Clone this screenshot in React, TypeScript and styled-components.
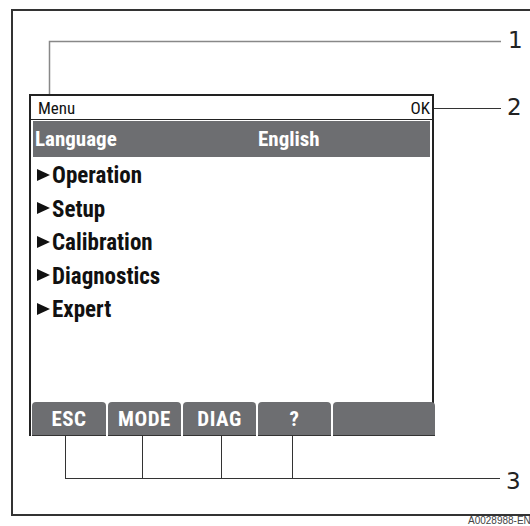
import React from 'react';
import styled, { createGlobalStyle } from 'styled-components';

const GlobalStyle = createGlobalStyle`
  html, body {
    margin: 0;
    padding: 0;
    background: #fff;
    overflow: hidden;
  }
  body {
    font-family: "Roboto Condensed", "Liberation Sans Narrow", "Arial Narrow", "DejaVu Sans Condensed", sans-serif;
  }
`;

const Page = styled.div`
  position: relative;
  width: 530px;
  height: 526px;
  overflow: hidden;
  box-sizing: border-box;
  padding: 9px 0 0 11px;
`;

const Frame = styled.div`
  box-sizing: border-box;
  width: 540px;
  height: 507px;
  border: 2px solid #333;
  border-right: none;
  padding: 83px 0 0 16px;
`;

const Screen = styled.div`
  box-sizing: border-box;
  width: 405px;
  height: 342px;
  border: 2px solid #222;
  border-bottom: none;
  display: flex;
  flex-direction: column;
`;

const Header = styled.div`
  height: 24px;
  flex: 0 0 auto;
  display: flex;
  align-items: flex-end;
  justify-content: space-between;
  padding: 0 2px 2px 7px;
  box-sizing: border-box;
  border-bottom: 1.5px solid #222;
  font-size: 17px;
  line-height: 1;
  color: #111;
`;

const Body = styled.div`
  flex: 1;
  display: flex;
  flex-direction: column;
  padding: 1px 2px 0;
`;

const SelectedRow = styled.div`
  height: 36px;
  background: #6d6e71;
  color: #fff;
  display: grid;
  grid-template-columns: 223px 1fr;
  align-items: center;
  font-weight: 700;
  font-size: 21px;
  padding-left: 2px;
`;

const MenuList = styled.ul`
  list-style: none;
  margin: 2px 0 0;
  padding: 0;
`;

const MenuItem = styled.li`
  height: 33.5px;
  display: flex;
  align-items: center;
  gap: 2px;
  padding-left: 4px;
  font-weight: 700;
  font-size: 23px;
  color: #111;
`;

const Arrow = styled.span`
  width: 0;
  height: 0;
  border-top: 6.5px solid transparent;
  border-bottom: 6.5px solid transparent;
  border-left: 13px solid #111;
  margin-top: -2px;
`;

const TabBar = styled.div`
  display: flex;
  gap: 2px;
  height: 34px;
  margin: 0 -3px 0 1px;
`;

const Tab = styled.div<{ $w?: number }>`
  flex: ${({ $w }) => ($w ? `0 0 ${$w}px` : '1')};
  background: #6d6e71;
  border-radius: 4px 4px 0 0;
  border-bottom: 1px solid #333;
  display: flex;
  align-items: center;
  justify-content: center;
  color: #fff;
  font-weight: 700;
  font-size: 21px;
  letter-spacing: 0.5px;
`;

const Leaders = styled.svg`
  position: absolute;
  left: 0;
  top: 0;
  pointer-events: none;
`;

const Callout = styled.span<{ $x: number; $y: number }>`
  position: absolute;
  left: ${({ $x }) => $x}px;
  top: ${({ $y }) => $y}px;
  font-family: "DejaVu Sans", sans-serif;
  font-size: 23px;
  line-height: 1;
  color: #222;
`;

const Code = styled.div`
  position: absolute;
  left: 468px;
  top: 515px;
  font-family: "Liberation Sans", sans-serif;
  font-size: 10px;
  color: #444;
  white-space: nowrap;
`;

const items = ['Operation', 'Setup', 'Calibration', 'Diagnostics', 'Expert'];
const tabs: { label: string; w?: number }[] = [
  { label: 'ESC', w: 74 },
  { label: 'MODE', w: 73 },
  { label: 'DIAG', w: 73 },
  { label: '?', w: 73 },
  { label: '' },
];

export default function App() {
  return (
    <>
      <GlobalStyle />
      <Page>
        <Frame>
          <Screen>
            <Header>
              <span>Menu</span>
              <span>OK</span>
            </Header>
            <Body>
              <SelectedRow>
                <span>Language</span>
                <span>English</span>
              </SelectedRow>
              <MenuList>
                {items.map((it) => (
                  <MenuItem key={it}>
                    <Arrow />
                    {it}
                  </MenuItem>
                ))}
              </MenuList>
            </Body>
            <TabBar>
              {tabs.map((t, i) => (
                <Tab key={i} $w={t.w}>{t.label}</Tab>
              ))}
            </TabBar>
          </Screen>
        </Frame>

        <Leaders width="530" height="526">
          <polyline points="49.5,94 49.5,41.5 501,41.5" fill="none" stroke="#888" strokeWidth="1.5" />
          <line x1="434" y1="108.5" x2="501" y2="108.5" stroke="#333" strokeWidth="1" />
          <g stroke="#333" strokeWidth="1" fill="none">
            <line x1="65.5" y1="436" x2="65.5" y2="478.5" />
            <line x1="142.5" y1="436" x2="142.5" y2="478.5" />
            <line x1="221.5" y1="436" x2="221.5" y2="478.5" />
            <line x1="292.5" y1="436" x2="292.5" y2="478.5" />
            <line x1="65" y1="478.5" x2="500" y2="478.5" />
          </g>
        </Leaders>
        <Callout $x={508} $y={29}>1</Callout>
        <Callout $x={507} $y={96}>2</Callout>
        <Callout $x={506} $y={470}>3</Callout>
        <Code>A0028988-EN</Code>
      </Page>
    </>
  );
}
